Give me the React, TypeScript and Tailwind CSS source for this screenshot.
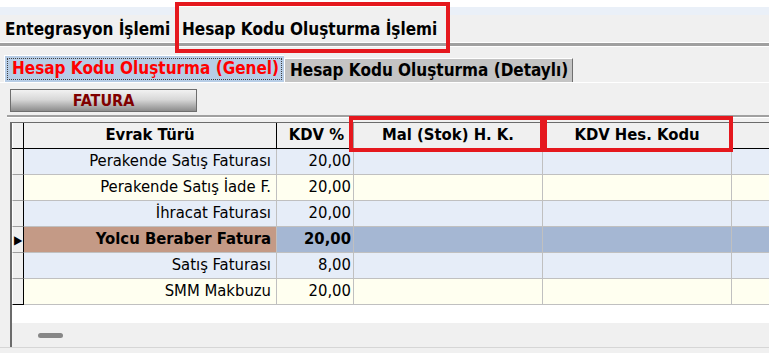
import React from 'react';

type Row = { name: string; kdv: string; selected?: boolean };

const rows: Row[] = [
  { name: 'Perakende Satış Faturası', kdv: '20,00' },
  { name: 'Perakende Satış İade F.', kdv: '20,00' },
  { name: 'İhracat Faturası', kdv: '20,00' },
  { name: 'Yolcu Beraber Fatura', kdv: '20,00', selected: true },
  { name: 'Satış Faturası', kdv: '8,00' },
  { name: 'SMM Makbuzu', kdv: '20,00' },
];

const App: React.FC = () => {
  return (
    <div className="relative w-[769px] h-[353px] overflow-hidden bg-[#f0f0f0] text-black font-['DejaVu_Sans_Condensed','DejaVu_Sans',sans-serif]">
      {/* top tabs */}
      <div className="flex items-end h-[42px] bg-[linear-gradient(to_bottom,#ffffff_0px,#ffffff_7px,#eaf0f8_7px,#eaf0f8_15px,#f0f0f0_15px)]">
        <div className="h-[27px] w-[178px] pl-[5px] pt-[3px] flex items-center text-[17px] font-bold whitespace-nowrap">
          Entegrasyon İşlemi
        </div>
        <div className="h-[35px] w-[268px] pl-[4px] pt-[11px] flex items-center bg-[#f0f0f0] text-[17px] font-bold whitespace-nowrap">
          Hesap Kodu Oluşturma İşlemi
        </div>
      </div>
      <div className="h-px bg-white" />
      <div className="h-[3px] bg-[#a0a0a0]" />
      <div className="h-px bg-white" />

      {/* inner tabs */}
      <div className="flex items-end h-[35px] pl-[4px]">
        <div className="h-[27px] w-[280px] p-[2px] bg-[#b7cde6] border-t border-l border-white">
          <div className="h-full flex items-center pl-[4px] border border-dotted border-[#404040] text-[17px] font-bold text-[#ff0000] whitespace-nowrap">
            Hesap Kodu Oluşturma (Genel)
          </div>
        </div>
        <div className="h-[24px] w-[289px] flex items-center pl-[5px] bg-[#c4c4c4] border-t border-l border-white border-r border-r-[#707070] text-[17px] font-bold whitespace-nowrap">
          Hesap Kodu Oluşturma (Detaylı)
        </div>
      </div>
      <div className="h-px bg-white" />

      {/* button */}
      <div className="pl-[10px] pt-[6px]">
        <div className="h-[23px] w-[187px] flex items-center justify-center border border-[#6e6e6e] bg-[linear-gradient(to_bottom,#f2f2f2,#d8d8d8_45%,#8c8c8c)] text-[16px] font-bold text-[#800000]">
          FATURA
        </div>
      </div>
      <div className="h-[3px]" />
      <div className="ml-[7px] h-[2px] bg-[#a0a0a0]" />
      <div className="ml-[7px] h-px bg-white" />
      <div className="h-[4px]" />

      {/* grid */}
      <div className="ml-[10px] border-l-2 border-t border-[#6b6b6b] bg-white">
        <div className="flex h-[26px] bg-[#f0f0f0] border-b border-black text-[16.5px] font-bold">
          <div className="w-[12px] shrink-0 border-l border-white border-r border-r-black" />
          <div className="w-[253px] shrink-0 flex items-center justify-center border-r border-black">Evrak Türü</div>
          <div className="w-[77px] shrink-0 flex items-center justify-end pr-[9px] border-r border-[#a0a0a0]">KDV %</div>
          <div className="w-[189px] shrink-0 flex items-center justify-center border-r border-[#a0a0a0]">Mal (Stok) H. K.</div>
          <div className="w-[189px] shrink-0 flex items-center justify-center border-r border-[#a0a0a0]">KDV Hes. Kodu</div>
          <div className="flex-1" />
        </div>
        {rows.map((r, i) => {
          const base = r.selected ? 'bg-[#a5b7d3]' : i % 2 === 0 ? 'bg-[#e6edf8]' : 'bg-[#fffff0]';
          const first = r.selected ? 'bg-[#c49a86]' : base;
          return (
            <div key={i} className={`flex h-[26px] text-[16.5px] ${r.selected ? 'font-bold' : ''}`}>
              <div className={`w-[12px] shrink-0 flex items-center bg-[#f0f0f0] border-l border-white border-r border-r-black border-b ${i === rows.length - 1 ? 'border-b-black' : 'border-b-[#a0a0a0]'}`}>
                {r.selected && <span className="text-[12px] leading-none pl-[1px]">▶</span>}
              </div>
              <div className={`w-[253px] shrink-0 flex items-center justify-end pr-[5px] border-r border-b border-[#c0c0c0] whitespace-nowrap ${first}`}>{r.name}</div>
              <div className={`w-[77px] shrink-0 flex items-center justify-end pr-[2px] border-r border-b border-[#c0c0c0] ${base}`}>{r.kdv}</div>
              <div className={`w-[189px] shrink-0 border-r border-b border-[#c0c0c0] ${base}`} />
              <div className={`w-[189px] shrink-0 border-r border-b border-[#c0c0c0] ${base}`} />
              <div className={`flex-1 border-b border-[#c0c0c0] ${base}`} />
            </div>
          );
        })}
        <div className="h-[18px] bg-white" />
        <div className="h-[24px] bg-[#f0f0f0] flex items-center pl-[26px] pt-[1px]">
          <div className="w-[25px] h-[5px] rounded-full bg-[#878787]" />
        </div>
      </div>
      <div className="h-px bg-[#d6d6d6]" />

      {/* annotation boxes */}
      <div className="absolute left-[175px] top-[2px] w-[275px] h-[51px] border-4 border-[#e5181e]" />
      <div className="absolute left-[349px] top-[116px] w-[195px] h-[36px] border-4 border-[#e5181e]" />
      <div className="absolute left-[543px] top-[116px] w-[190px] h-[36px] border-4 border-[#e5181e]" />
    </div>
  );
};

export default App;
